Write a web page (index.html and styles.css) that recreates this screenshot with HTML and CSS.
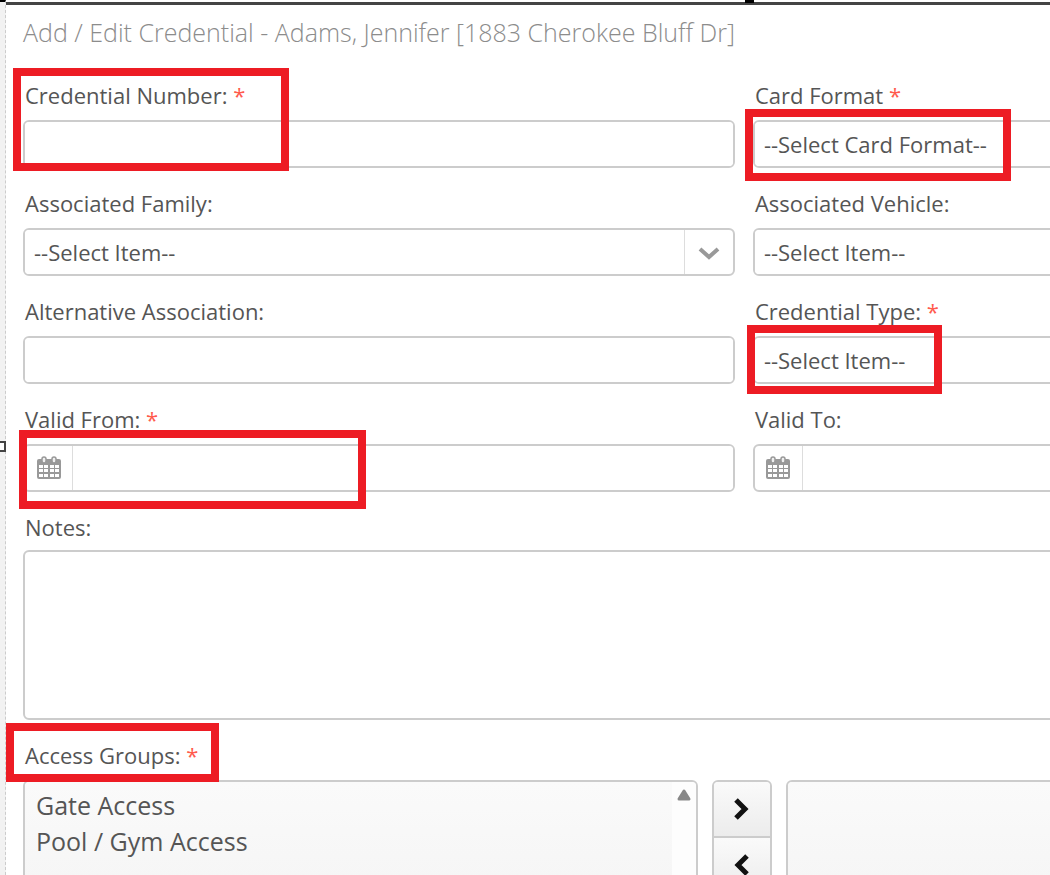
FILE: index.html
```html
<!DOCTYPE html>
<html lang="en">
<head>
<meta charset="utf-8">
<title>Add / Edit Credential</title>
<link rel="stylesheet" href="styles.css">
</head>
<body>
<svg width="0" height="0" class="defs" aria-hidden="true">
  <symbol id="calendar" viewBox="0 0 24 24">
    <path d="M2 3h20q2 0 2 2v16q0 2-2 2H2q-2 0-2-2V5q0-2 2-2z" fill="#999"/>
    <path d="M2 9h4v3H2zM7 9h4v3H7zM13 9h4v3h-4zM18 9h4v3h-4zM2 13h4v3H2zM7 13h4v3H7zM13 13h4v3h-4zM18 13h4v3h-4zM2 18h4v3H2zM7 18h4v3H7zM13 18h4v3h-4zM18 18h4v3h-4z" fill="#fff"/>
    <rect x="5" y="1" width="4" height="6" rx="2" fill="#eee" stroke="#999" stroke-width="1.5"/>
    <rect x="15" y="1" width="4" height="6" rx="2" fill="#eee" stroke="#999" stroke-width="1.5"/>
  </symbol>
  <symbol id="chevron" viewBox="0 0 22 16">
    <path d="M2 3l9 8 9-8" fill="none" stroke="#999" stroke-width="4"/>
  </symbol>
</svg>
<div class="page">
  <div class="rail"><span class="handle"></span></div>
  <main class="panel">
    <span class="marker"></span>
    <h1 class="title">Add / Edit Credential - Adams, Jennifer [1883 Cherokee Bluff Dr]</h1>
    <form class="form">
      <div class="fields">
        <div class="field">
          <label class="label" for="number">Credential Number: <span class="required">*</span></label>
          <div class="control"><input class="entry" id="number" type="text"></div>
          <span class="highlight highlight-number"></span>
        </div>
        <div class="field">
          <label class="label" for="format">Card Format <span class="required">*</span></label>
          <div class="control"><select class="entry" id="format"><option>--Select Card Format--</option></select><span class="addon addon-end"><svg class="chevron"><use href="#chevron"/></svg></span></div>
          <span class="highlight highlight-format"></span>
        </div>
        <div class="field">
          <label class="label" for="family">Associated Family:</label>
          <div class="control"><select class="entry" id="family"><option>--Select Item--</option></select><span class="addon addon-end"><svg class="chevron"><use href="#chevron"/></svg></span></div>
        </div>
        <div class="field">
          <label class="label" for="vehicle">Associated Vehicle:</label>
          <div class="control"><select class="entry" id="vehicle"><option>--Select Item--</option></select><span class="addon addon-end"><svg class="chevron"><use href="#chevron"/></svg></span></div>
        </div>
        <div class="field">
          <label class="label" for="alternative">Alternative Association:</label>
          <div class="control"><input class="entry" id="alternative" type="text"></div>
        </div>
        <div class="field">
          <label class="label" for="type">Credential Type: <span class="required">*</span></label>
          <div class="control"><select class="entry" id="type"><option>--Select Item--</option></select><span class="addon addon-end"><svg class="chevron"><use href="#chevron"/></svg></span></div>
          <span class="highlight highlight-type"></span>
        </div>
        <div class="field">
          <label class="label" for="from">Valid From: <span class="required">*</span></label>
          <div class="control"><span class="addon addon-start"><svg class="calendar"><use href="#calendar"/></svg></span><input class="entry" id="from" type="text"></div>
          <span class="highlight highlight-from"></span>
        </div>
        <div class="field">
          <label class="label" for="to">Valid To:</label>
          <div class="control"><span class="addon addon-start"><svg class="calendar"><use href="#calendar"/></svg></span><input class="entry" id="to" type="text"></div>
        </div>
      </div>
      <div class="field field-notes">
        <label class="label" for="notes">Notes:</label>
        <textarea class="notes" id="notes"></textarea>
      </div>
      <div class="field">
        <label class="label" for="groups">Access Groups: <span class="required">*</span></label>
        <div class="transfer">
          <div class="list">
            <select class="options" id="groups" multiple>
              <option>Gate Access</option>
              <option>Pool / Gym Access</option>
            </select>
            <span class="scroll"><svg width="16" height="14" viewBox="0 0 16 14"><path d="M8 3l5 8H3z" fill="#888" stroke="#888" stroke-width="3" stroke-linejoin="round"/></svg></span>
          </div>
          <div class="moves">
            <button class="move" type="button" aria-label="Add group"><svg width="18" height="24" viewBox="0 0 18 24"><path d="M3 3l9 9-9 9" fill="none" stroke="#111" stroke-width="5"/></svg></button>
            <button class="move" type="button" aria-label="Remove group"><svg width="18" height="24" viewBox="0 0 18 24"><path d="M14 3l-9 9 9 9" fill="none" stroke="#111" stroke-width="5"/></svg></button>
          </div>
          <div class="list">
            <select class="options" aria-label="Selected groups" multiple></select>
          </div>
        </div>
        <span class="highlight highlight-groups"></span>
      </div>
    </form>
  </main>
</div>
</body>
</html>
```
FILE: styles.css
```css
* { box-sizing: border-box; }

body {
  margin: 0;
  background: #fff;
  color: #555;
  font: 22px/30px "Open Sans", "Noto Sans", sans-serif;
}

.defs { position: absolute; }

.page {
  display: flex;
  height: 100vh;
  overflow: hidden;
}

.rail {
  flex: none;
  position: relative;
  width: 6px;
  background: #f2f2f2;
  border-top: 2px solid #000;
  border-right: 1px dashed #ccc;
}

.handle {
  position: absolute;
  top: 439px;
  left: -5px;
  width: 11px;
  height: 11px;
  border: 2px solid #444;
  background: #fff;
}

.panel {
  flex: 1;
  min-width: 0;
  position: relative;
  margin-top: 2px;
  border-top: 3px solid #444;
  padding: 8px 0 0 17px;
}

.marker {
  position: absolute;
  top: -5px;
  left: 739px;
  width: 9px;
  height: 3px;
  background: #000;
}

.title {
  margin: 0 0 28px;
  color: #8c8c8c;
  font-size: 25px;
  font-weight: 300;
  line-height: 39px;
  white-space: nowrap;
}

/* The form is wider than the panel, which crops its right-hand side. */
.form {
  display: flex;
  flex-direction: column;
  gap: 20px;
  width: calc(140% + 4px);
}

.fields {
  display: grid;
  grid-template-columns: 1fr 1fr;
  gap: 20px 18px;
}

.field {
  display: flex;
  flex-direction: column;
  gap: 10px;
  position: relative;
}

.field-notes { gap: 8px; }

.label { padding-left: 2px; }

.required { color: #ff5a4d; }

.control {
  display: flex;
  height: 48px;
  border: 2px solid #ccc;
  border-radius: 6px;
  overflow: hidden;
}

.entry {
  flex: 1;
  min-width: 0;
  border: 0;
  padding: 0 9px;
  appearance: none;
  background: #fff;
  color: inherit;
  font: inherit;
}

.addon {
  flex: none;
  display: flex;
  align-items: center;
  justify-content: center;
  width: 49px;
}

.addon-start { width: 48px; border-right: 1px solid #ddd; }
.addon-end { border-left: 1px solid #ddd; }

.calendar { width: 24px; height: 24px; }
.chevron { width: 22px; height: 16px; margin-top: 4px; }

.notes {
  height: 170px;
  border: 2px solid #ccc;
  border-radius: 6px;
  resize: none;
  font: inherit;
}

.transfer {
  display: flex;
  gap: 14px;
  height: 200px;
  padding-right: 4px;
}

.list {
  flex: 1;
  display: flex;
  border: 2px solid #ccc;
  border-radius: 6px;
  overflow: hidden;
  background: #f9f9f9;
}

.options {
  flex: 1;
  border: 0;
  padding: 6px 0;
  overflow: hidden;
  background: linear-gradient(#fafafa, #f2f2f2);
  color: inherit;
  font: 25px/36px "Open Sans", "Noto Sans", sans-serif;
}

.options option {
  min-height: 36px;
  padding: 0 11px;
  line-height: 36px;
}

.scroll {
  width: 24px;
  padding: 6px 0 0 4px;
  background: #fdfdfd;
  line-height: 0;
}

.moves {
  display: flex;
  flex-direction: column;
  width: 60px;
  border: 2px solid #ccc;
  border-radius: 6px;
  overflow: hidden;
}

.move {
  display: flex;
  align-items: center;
  justify-content: center;
  height: 56px;
  border: 0;
  border-bottom: 2px solid #ccc;
  padding: 0;
  background: linear-gradient(#fafafa, #ececec);
}

.highlight {
  position: absolute;
  z-index: 1;
  border: 8px solid #ed1c24;
  pointer-events: none;
}

.highlight-number { top: -12px; left: -10px; width: 276px; height: 103px; }
.highlight-format { top: 29px; left: -8px; width: 266px; height: 72px; }
.highlight-type { top: 29px; left: -6px; width: 195px; height: 69px; }
.highlight-from { top: 26px; left: -4px; width: 347px; height: 79px; }
.highlight-groups { top: -17px; left: -17px; width: 213px; height: 59px; }
```
